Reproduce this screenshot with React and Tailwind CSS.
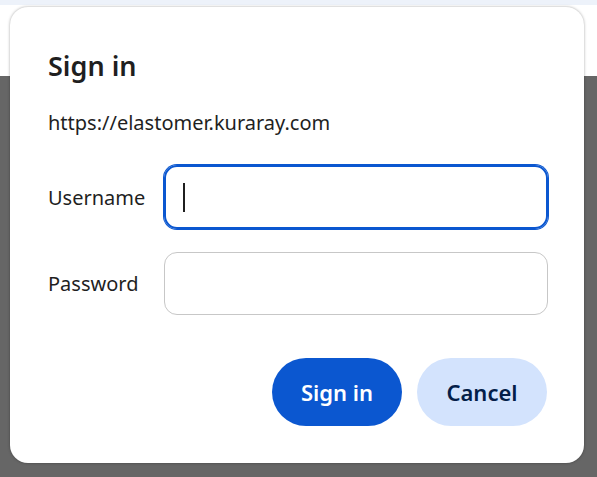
import React from "react";

export default function App() {
  return (
    <div className="relative w-[597px] h-[477px] overflow-hidden flex flex-col" style={{ fontFamily: '"Noto Sans", "Open Sans", sans-serif' }}>
      <div className="h-[5px] bg-[#edf2fa]" />
      <div className="h-[71px] bg-white" />
      <div className="flex-1 bg-[#666666]" />

      <div className="absolute left-[10px] top-[7px] w-[574px] h-[456px] rounded-[18px] bg-white shadow-[0_0_3px_rgba(0,0,0,0.35)] pl-[38px] pr-[36px] pt-[41px] flex flex-col text-[#1f1f1f]">
        <h1 className="text-[27px] leading-[36px] font-semibold">Sign in</h1>
        <p className="mt-[25px] text-[20px] leading-[28px]">https://elastomer.kuraray.com</p>

        <div className="mt-[28px] grid grid-cols-[116px_1fr] gap-y-[23px] items-center">
          <label className="text-[20px] leading-[28px] mt-[2px]">Username</label>
          <div className="h-[64px] rounded-[13px] border-2 border-[#0b57d0] ring-1 ring-[#0b57d0] flex items-center pl-[17px]">
            <div className="w-[2px] h-[29px] bg-[#1f1f1f]" />
          </div>
          <label className="text-[20px] leading-[28px] mt-[1px]">Password</label>
          <div className="h-[63px] rounded-[13px] border border-[#c7c7c7]" />
        </div>

        <div className="mt-[43px] flex justify-end gap-[15px] pr-[1px]">
          <button className="w-[130px] h-[68px] rounded-full bg-[#0b57d0] text-white text-[22px] font-semibold">Sign in</button>
          <button className="w-[130px] h-[68px] rounded-full bg-[#d3e3fd] text-[#041e49] text-[22px] font-semibold">Cancel</button>
        </div>
      </div>
    </div>
  );
}
